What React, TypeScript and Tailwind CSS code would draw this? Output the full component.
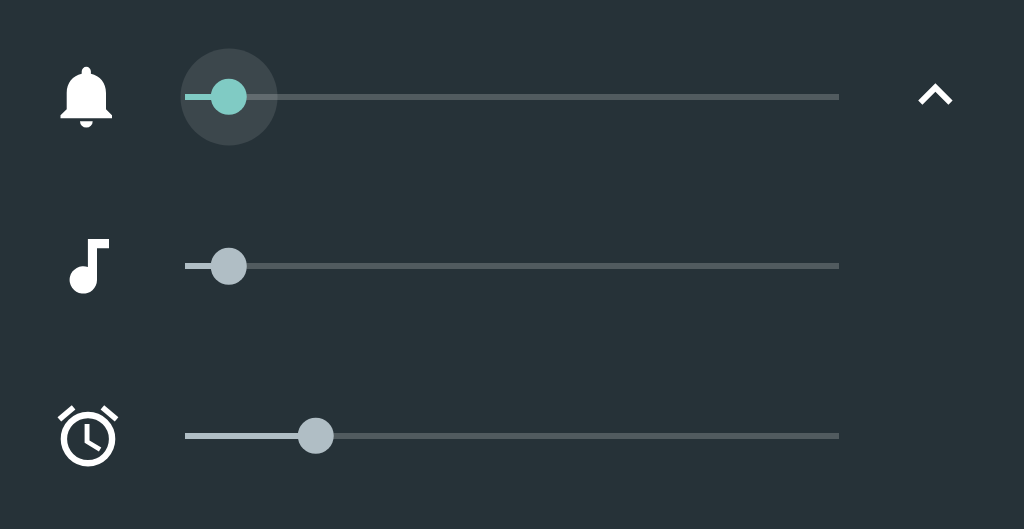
import type { ReactNode } from 'react';
import { clsx } from 'clsx';

function BellIcon() {
  return (
    <svg viewBox="0 0 72 72" className="h-[72px] w-[72px]" fill="currentColor">
      <path d="M36.3 5.8a4.6 4.6 0 0 1 4.6 4.6v2.4C50 14.8 56 22 56 32v16.3l6 6v2.9H10.5v-2.9l6.2-6V32c0-10 6-17.2 15-19.2v-2.4a4.6 4.6 0 0 1 4.6-4.6z" />
      <path d="M30 60.2h12.7a6.35 6.35 0 0 1-12.7 0z" />
    </svg>
  );
}

function NoteIcon() {
  return (
    <svg viewBox="0 0 72 72" className="h-[72px] w-[72px]" fill="currentColor">
      <path d="M37.9 9H59v9.2H47v31.7a13.7 13.7 0 1 1-9.1-12.9z" />
    </svg>
  );
}

function AlarmIcon() {
  return (
    <svg viewBox="0 0 72 72" className="h-[72px] w-[72px]" fill="currentColor">
      <circle cx="38" cy="39.1" r="24.1" fill="none" stroke="currentColor" strokeWidth="6.4" />
      <path d="M34.6 23.9h4.9v16.6l11.8 7.1-2.4 3.8-14.3-8.6z" />
      <path d="M21.8 5.2 25.4 9.5 11.2 21.5 7.5 17.2z" />
      <path d="M54.2 5.2 68.4 17.2l-3.6 4.3L50.6 9.5z" />
    </svg>
  );
}

function ChevronUpIcon() {
  return (
    <svg viewBox="0 0 40 40" className="h-10 w-10" fill="currentColor">
      <path d="M20.4 6.3 37.6 23.5l-4.2 4.3-13-13-13 13-4.2-4.3z" />
    </svg>
  );
}

type VolumeSliderProps = {
  label: string;
  value: number;
  active?: boolean;
};

function VolumeSlider({ label, value, active }: VolumeSliderProps) {
  const color = active ? 'bg-[#80cbc4]' : 'bg-[#b0bec5]';

  return (
    <div
      role="slider"
      aria-label={label}
      aria-valuemin={0}
      aria-valuemax={100}
      aria-valuenow={value}
      className="relative ml-[62.6px] h-[6px] w-[654px] bg-white/20"
    >
      {/* Touch halo */}
      {active && (
        <div
          className="absolute top-1/2 h-[97px] w-[97px] -translate-x-1/2 -translate-y-1/2 rounded-full bg-white/10"
          style={{ left: `${value}%` }}
        />
      )}
      <div className={clsx('relative h-full', color)} style={{ width: `${value}%` }} />
      <div
        className={clsx('absolute top-1/2 h-[36.5px] w-[36.5px] -translate-x-1/2 -translate-y-1/2 rounded-full', color)}
        style={{ left: `${value}%` }}
      />
    </div>
  );
}

type Stream = VolumeSliderProps & { icon: ReactNode };

const streams: Stream[] = [
  { label: 'Ring', value: 6.76, active: true, icon: <BellIcon /> },
  { label: 'Media', value: 6.76, icon: <NoteIcon /> },
  { label: 'Alarm', value: 20.05, icon: <AlarmIcon /> },
];

export default function App() {
  return (
    <main className="h-screen w-full overflow-hidden bg-[#263238] pt-3 text-white">
      {streams.map(({ icon, ...stream }) => (
        <div key={stream.label} className="flex h-[169.5px] items-center pl-[50px]">
          {icon}
          <VolumeSlider {...stream} />
          {stream.active && (
            <button aria-label="Collapse" className="ml-[76.7px]">
              <ChevronUpIcon />
            </button>
          )}
        </div>
      ))}
    </main>
  );
}
